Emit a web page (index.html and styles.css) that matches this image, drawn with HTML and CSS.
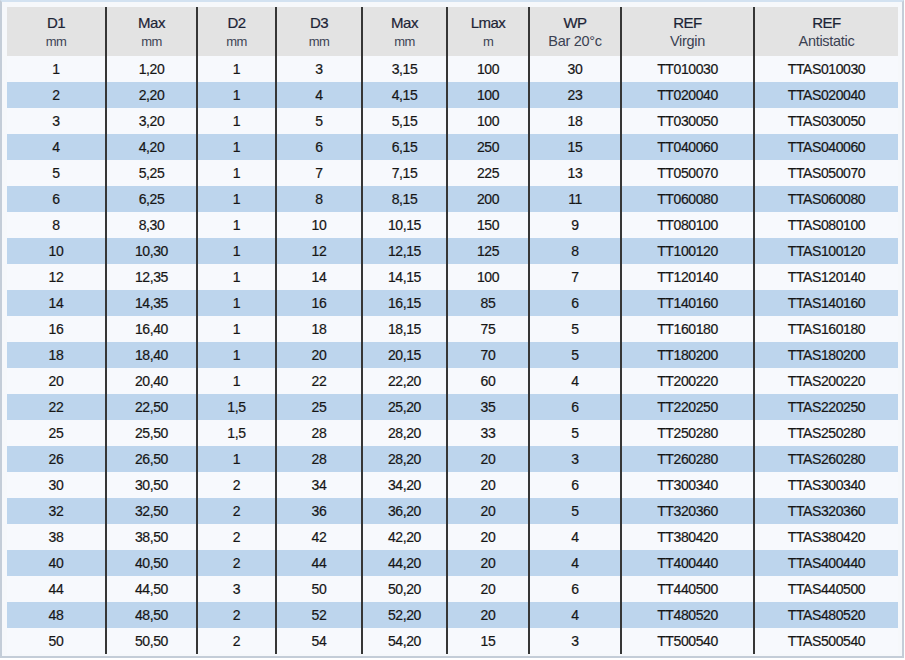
FILE: index.html
```html
<!DOCTYPE html>
<html>
<head>
<meta charset="utf-8">
<link rel="stylesheet" href="styles.css">
</head>
<body>
<div class="frame">
<table class="spec">
<colgroup>
<col class="c1"><col class="c2"><col class="c3"><col class="c4"><col class="c5"><col class="c6"><col class="c7"><col class="c8"><col class="c9">
</colgroup>
<thead>
<tr>
<th><span class="t">D1</span><span class="u">mm</span></th>
<th><span class="t">Max</span><span class="u">mm</span></th>
<th><span class="t">D2</span><span class="u">mm</span></th>
<th><span class="t">D3</span><span class="u">mm</span></th>
<th><span class="t">Max</span><span class="u">mm</span></th>
<th><span class="t">Lmax</span><span class="u">m</span></th>
<th><span class="t">WP</span><span class="s">Bar 20°c</span></th>
<th><span class="t">REF</span><span class="s">Virgin</span></th>
<th><span class="t">REF</span><span class="s">Antistatic</span></th>
</tr>
</thead>
<tbody>
<tr><td>1</td><td>1,20</td><td>1</td><td>3</td><td>3,15</td><td>100</td><td>30</td><td>TT010030</td><td>TTAS010030</td></tr>
<tr><td>2</td><td>2,20</td><td>1</td><td>4</td><td>4,15</td><td>100</td><td>23</td><td>TT020040</td><td>TTAS020040</td></tr>
<tr><td>3</td><td>3,20</td><td>1</td><td>5</td><td>5,15</td><td>100</td><td>18</td><td>TT030050</td><td>TTAS030050</td></tr>
<tr><td>4</td><td>4,20</td><td>1</td><td>6</td><td>6,15</td><td>250</td><td>15</td><td>TT040060</td><td>TTAS040060</td></tr>
<tr><td>5</td><td>5,25</td><td>1</td><td>7</td><td>7,15</td><td>225</td><td>13</td><td>TT050070</td><td>TTAS050070</td></tr>
<tr><td>6</td><td>6,25</td><td>1</td><td>8</td><td>8,15</td><td>200</td><td>11</td><td>TT060080</td><td>TTAS060080</td></tr>
<tr><td>8</td><td>8,30</td><td>1</td><td>10</td><td>10,15</td><td>150</td><td>9</td><td>TT080100</td><td>TTAS080100</td></tr>
<tr><td>10</td><td>10,30</td><td>1</td><td>12</td><td>12,15</td><td>125</td><td>8</td><td>TT100120</td><td>TTAS100120</td></tr>
<tr><td>12</td><td>12,35</td><td>1</td><td>14</td><td>14,15</td><td>100</td><td>7</td><td>TT120140</td><td>TTAS120140</td></tr>
<tr><td>14</td><td>14,35</td><td>1</td><td>16</td><td>16,15</td><td>85</td><td>6</td><td>TT140160</td><td>TTAS140160</td></tr>
<tr><td>16</td><td>16,40</td><td>1</td><td>18</td><td>18,15</td><td>75</td><td>5</td><td>TT160180</td><td>TTAS160180</td></tr>
<tr><td>18</td><td>18,40</td><td>1</td><td>20</td><td>20,15</td><td>70</td><td>5</td><td>TT180200</td><td>TTAS180200</td></tr>
<tr><td>20</td><td>20,40</td><td>1</td><td>22</td><td>22,20</td><td>60</td><td>4</td><td>TT200220</td><td>TTAS200220</td></tr>
<tr><td>22</td><td>22,50</td><td>1,5</td><td>25</td><td>25,20</td><td>35</td><td>6</td><td>TT220250</td><td>TTAS220250</td></tr>
<tr><td>25</td><td>25,50</td><td>1,5</td><td>28</td><td>28,20</td><td>33</td><td>5</td><td>TT250280</td><td>TTAS250280</td></tr>
<tr><td>26</td><td>26,50</td><td>1</td><td>28</td><td>28,20</td><td>20</td><td>3</td><td>TT260280</td><td>TTAS260280</td></tr>
<tr><td>30</td><td>30,50</td><td>2</td><td>34</td><td>34,20</td><td>20</td><td>6</td><td>TT300340</td><td>TTAS300340</td></tr>
<tr><td>32</td><td>32,50</td><td>2</td><td>36</td><td>36,20</td><td>20</td><td>5</td><td>TT320360</td><td>TTAS320360</td></tr>
<tr><td>38</td><td>38,50</td><td>2</td><td>42</td><td>42,20</td><td>20</td><td>4</td><td>TT380420</td><td>TTAS380420</td></tr>
<tr><td>40</td><td>40,50</td><td>2</td><td>44</td><td>44,20</td><td>20</td><td>4</td><td>TT400440</td><td>TTAS400440</td></tr>
<tr><td>44</td><td>44,50</td><td>3</td><td>50</td><td>50,20</td><td>20</td><td>6</td><td>TT440500</td><td>TTAS440500</td></tr>
<tr><td>48</td><td>48,50</td><td>2</td><td>52</td><td>52,20</td><td>20</td><td>4</td><td>TT480520</td><td>TTAS480520</td></tr>
<tr><td>50</td><td>50,50</td><td>2</td><td>54</td><td>54,20</td><td>15</td><td>3</td><td>TT500540</td><td>TTAS500540</td></tr>
</tbody>
</table>
</div>
</body>
</html>
```
FILE: styles.css
```css
html, body {
  margin: 0;
  padding: 0;
  background: #ffffff;
}
body {
  font-family: "Liberation Sans", Arial, sans-serif;
}
.frame {
  box-sizing: border-box;
  width: 904px;
  height: 658px;
  padding: 5px 4px 2px 5px;
  border: 2px solid #c4cdd8;
  border-top-color: #d3e2f1;
  background: #f6f8fb;
}
.spec {
  width: 891px;
  table-layout: fixed;
  border-collapse: collapse;
  border-spacing: 0;
}
.c1 { width: 99px; }
.c2 { width: 91px; }
.c3 { width: 79px; }
.c4 { width: 86px; }
.c5 { width: 85px; }
.c6 { width: 82px; }
.c7 { width: 92px; }
.c8 { width: 133px; }
.c9 { width: 144px; }
.spec th, .spec td {
  padding: 0;
  text-align: center;
  border-left: 2px solid #363636;
}
.spec th:first-child, .spec td:first-child {
  border-left: none;
}
.spec th {
  height: 49px;
  background: #e3e3e3;
  font-weight: normal;
  vertical-align: middle;
}
.spec th span {
  display: block;
}
.t {
  font-size: 15px;
  line-height: 19px;
  letter-spacing: -0.5px;
  color: #1c2436;
  -webkit-text-stroke: 0.2px #1c2436;
}
.u {
  font-size: 13px;
  line-height: 19px;
  color: #3d4454;
  letter-spacing: -0.6px;
}
.s {
  font-size: 14.5px;
  line-height: 19px;
  letter-spacing: -0.3px;
  color: #3a4152;
}
.spec td {
  height: 26px;
  font-size: 14px;
  letter-spacing: -0.4px;
  color: #161616;
  -webkit-text-stroke: 0.2px #161616;
  vertical-align: middle;
  line-height: 16px;
}
.spec tbody tr:nth-child(odd) td {
  background: #f7f9fd;
}
.spec tbody tr:nth-child(even) td {
  background: #bdd5ed;
}
```
